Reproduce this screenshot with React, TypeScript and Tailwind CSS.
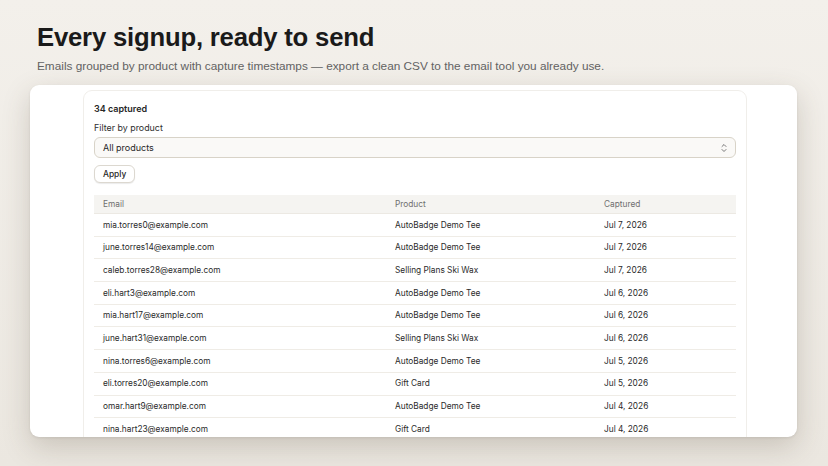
import React from "react";

const rows = [
  ["mia.torres0@example.com", "AutoBadge Demo Tee", "Jul 7, 2026"],
  ["june.torres14@example.com", "AutoBadge Demo Tee", "Jul 7, 2026"],
  ["caleb.torres28@example.com", "Selling Plans Ski Wax", "Jul 7, 2026"],
  ["eli.hart3@example.com", "AutoBadge Demo Tee", "Jul 6, 2026"],
  ["mia.hart17@example.com", "AutoBadge Demo Tee", "Jul 6, 2026"],
  ["june.hart31@example.com", "Selling Plans Ski Wax", "Jul 6, 2026"],
  ["nina.torres6@example.com", "AutoBadge Demo Tee", "Jul 5, 2026"],
  ["eli.torres20@example.com", "Gift Card", "Jul 5, 2026"],
  ["omar.hart9@example.com", "AutoBadge Demo Tee", "Jul 4, 2026"],
  ["nina.hart23@example.com", "Gift Card", "Jul 4, 2026"],
];

export default function App() {
  return (
    <div
      className="w-[828px] h-[466px] overflow-hidden bg-gradient-to-b from-[#f3f0eb] to-[#ebe7e0] pl-[30px] pr-[31px] pt-[22px]"
      style={{ fontFamily: "Inter, 'Liberation Sans', sans-serif" }}
    >
      <div className="pl-[7px]" style={{ fontFamily: "'Liberation Sans', Arial, sans-serif" }}>
        <h1 className="text-[25.7px] leading-[30px] font-bold tracking-[-0.2px] text-[#1a1a1a]">
          Every signup, ready to send
        </h1>
        <p className="mt-[6px] text-[11.8px] leading-[16px] text-[#626262]">
          Emails grouped by product with capture timestamps — export a clean CSV to the email tool you already use.
        </p>
      </div>
      <div className="mt-[11px] h-[352px] rounded-[9px] bg-white shadow-[0_10px_28px_rgba(80,70,50,0.22),0_1px_3px_rgba(0,0,0,0.08)] overflow-hidden pt-[5px] pl-[53px] pr-[50px]">
        <div className="h-[400px] rounded-t-[9px] border border-[#f0eeea] px-[10px] pt-[12px]">
          <div className="text-[9px] leading-[12px] font-semibold text-[#262626]">34 captured</div>
          <div className="mt-[7px] text-[8.9px] leading-[12px] text-[#2e2e2e]">Filter by product</div>
          <div className="mt-[3px] h-[21px] rounded-[6px] border-[1.5px] border-[#d8d3c8] bg-[#faf9f7] flex items-center justify-between pl-[8px] pr-[7px]">
            <span className="text-[9px] text-[#262626]">All products</span>
            <svg width="8" height="10" viewBox="0 0 8 10" fill="none" stroke="#777" strokeWidth="1" strokeLinecap="round" strokeLinejoin="round">
              <path d="M2 3.5 L4 1.5 L6 3.5" />
              <path d="M2 6.5 L4 8.5 L6 6.5" />
            </svg>
          </div>
          <div className="mt-[7px] flex">
            <div className="h-[18px] px-[8px] rounded-[6px] border border-[#dcd8d0] bg-white shadow-[0_1px_1px_rgba(0,0,0,0.08)] flex items-center text-[8.4px] font-medium text-[#262626]">
              Apply
            </div>
          </div>
          <div className="mt-[12px]">
            <div className="h-[19px] bg-[#f5f4f1] flex items-center text-[8.3px] text-[#6f6f6f] border-b border-[#ece9e3]">
              <div className="w-[292px] pl-[9px]">Email</div>
              <div className="w-[209px] pl-[9px]">Product</div>
              <div className="flex-1 pl-[9px]">Captured</div>
            </div>
            {rows.map((r, i) => (
              <div
                key={i}
                className="h-[22.7px] flex items-center text-[8.3px] text-[#2a2a2a] border-b border-[#efece6]"
              >
                <div className="w-[292px] pl-[9px]">{r[0]}</div>
                <div className="w-[209px] pl-[9px]">{r[1]}</div>
                <div className="flex-1 pl-[9px]">{r[2]}</div>
              </div>
            ))}
          </div>
        </div>
      </div>
    </div>
  );
}
